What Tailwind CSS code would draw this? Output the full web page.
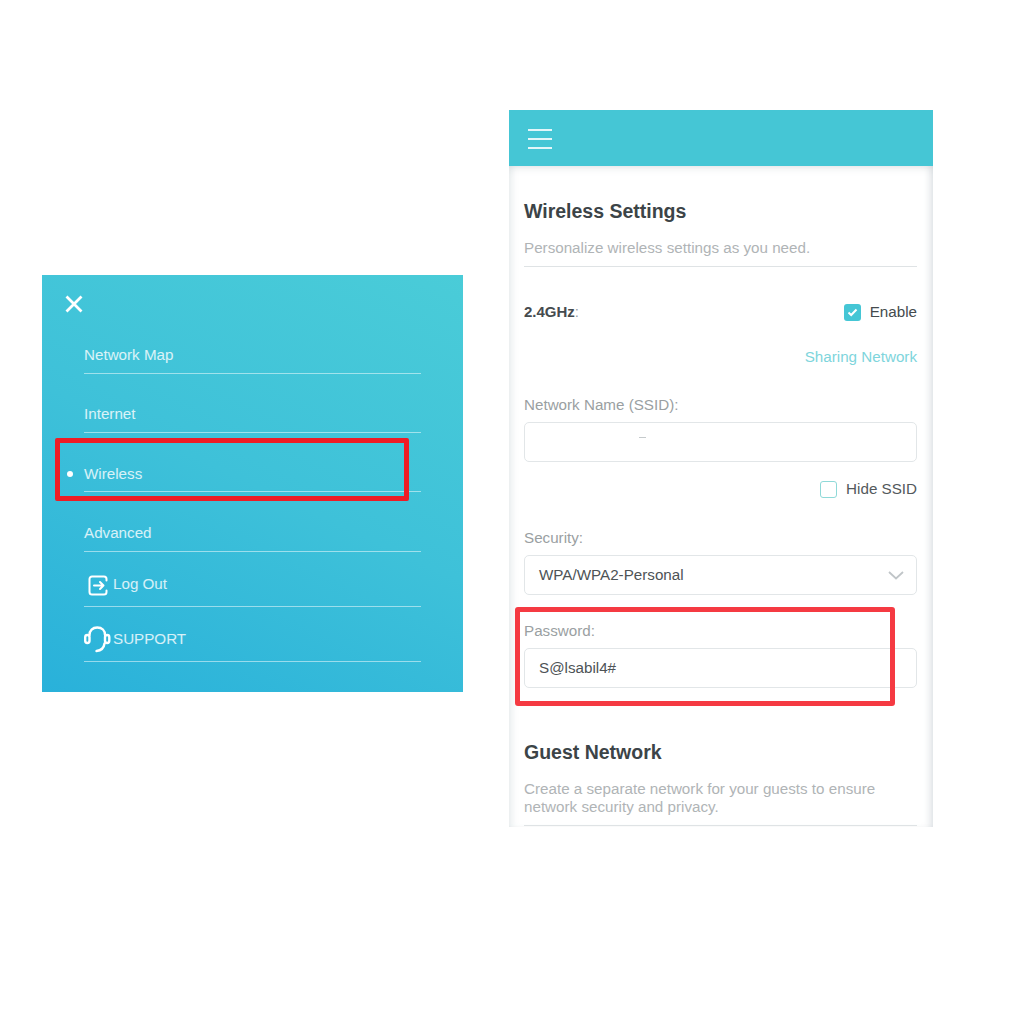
<!DOCTYPE html>
<html>
<head>
<meta charset="utf-8">
<script src="https://cdn.jsdelivr.net/npm/@tailwindcss/browser@4"></script>
</head>
<body class="bg-white font-['Liberation_Sans',Arial,sans-serif]">
<div class="relative w-[1024px] h-[1013px] overflow-hidden flex items-start pl-[42px]">

  <!-- Left menu panel -->
  <div class="relative mt-[275px] w-[421px] h-[417px] px-[42px] bg-linear-[205deg] from-[#4accd8] via-[#3ec1d9] to-[#29b1da] text-white/80 text-[15.200px] leading-[18px] shrink-0">
    <div class="h-[41px] -ml-[42px] pl-[23px] pt-[20px]">
      <svg width="18" height="18" viewBox="0 0 18 18" fill="none" stroke="white" stroke-width="2.800"><path d="M1.500 1.500 16.500 16.500M16.500 1.500 1.500 16.500"/></svg>
    </div>
    <div class="h-[58px] flex items-end pb-[9px] border-b border-white/50">Network Map</div>
    <div class="h-[59px] flex items-end pb-[9px] border-b border-white/50">Internet</div>
    <div class="relative h-[59px] flex items-end pb-[8px] border-b border-white/50">
      <span class="absolute -left-[17px] bottom-[14px] w-[6px] h-[6px] rounded-full bg-white"></span>
      Wireless
    </div>
    <div class="h-[60px] flex items-end pb-[9px] border-b border-white/50">Advanced</div>
    <div class="h-[55px] flex items-end pb-[13px] border-b border-white/50">
      <svg class="ml-[4px] mr-[5px] mb-[-3px]" width="20" height="21" viewBox="0 0 20 21" fill="none" stroke="white" stroke-width="2" stroke-linecap="round" stroke-linejoin="round"><path d="M18.500 5.500V4a2.500 2.500 0 0 0-2.500-2.500H4A2.500 2.500 0 0 0 1.500 4v13A2.500 2.500 0 0 0 4 19.500h12a2.500 2.500 0 0 0 2.500-2.500v-1.500"/><path d="M6 10.500H15.500M12 7l3.500 3.500L12 14"/></svg>
      <span>Log Out</span>
    </div>
    <div class="h-[55px] flex items-end pb-[13px] border-b border-white/50">
      <svg class="mb-[-5px] mr-[2px]" width="27" height="27" viewBox="0 0 27 27" fill="none" stroke="white" stroke-width="2.400" stroke-linecap="round"><path d="M5.500 9C5.500 4.500 8.500 1.500 13.250 1.500S21 4.500 21 9"/><rect x="1.200" y="9" width="4.300" height="8" rx="2.150"/><rect x="21" y="9" width="4.300" height="8" rx="2.150"/><path d="M20.500 17.500C20 21.500 17 24.500 12.500 25"/></svg>
      <span>SUPPORT</span>
    </div>
    <div class="absolute left-[13px] top-[163px] w-[354px] h-[63px] border-[5px] border-[#ee1c25] rounded-[2px]"></div>
  </div>

  <!-- Right settings panel -->
  <div class="relative ml-[46px] mt-[110px] w-[424px] h-[717px] overflow-hidden bg-white shrink-0">
    <div class="h-[56px] bg-[#45c6d5] flex flex-col justify-center gap-[7px] pl-[19px] pt-[2px]">
      <span class="w-[24px] h-[2px] bg-white/85"></span>
      <span class="w-[24px] h-[2px] bg-white/85"></span>
      <span class="w-[24px] h-[2px] bg-white/85"></span>
    </div>
    <div class="h-[661px] pl-[15px] pr-[16px] shadow-[inset_0_8px_8px_-6px_rgba(120,140,150,0.18),inset_7px_0_7px_-4px_rgba(120,140,150,0.16),inset_-7px_0_7px_-4px_rgba(120,140,150,0.24)] text-[15.200px] leading-[20px]">
      <h2 class="pt-[33px] text-[19.500px] leading-[24px] font-bold text-[#3c4447]">Wireless Settings</h2>
      <p class="mt-[15px] pb-[8px] border-b border-[#dfe3e5] text-[#b0b4b6]">Personalize wireless settings as you need.</p>
      <div class="mt-[33px] h-[24px] flex items-center justify-between text-[#454b4e]">
        <span class="text-[15px]"><b>2.4GHz</b><span class="text-[#9aa0a3]">:</span></span>
        <span class="flex items-center gap-[9px]">
          <span class="w-[17px] h-[17px] rounded-[3px] bg-[#45c6d5] flex items-center justify-center">
            <svg width="11" height="9" viewBox="0 0 11 9" fill="none" stroke="white" stroke-width="2"><path d="M1.500 4.500 4.200 7 9.500 1.500"/></svg>
          </span>
          Enable
        </span>
      </div>
      <div class="mt-[23px] text-right text-[#7ed5dc]">Sharing Network</div>
      <div class="mt-[28px] text-[#9a9fa2]">Network Name (SSID):</div>
      <div class="relative mt-[7px] h-[40px] border border-[#e2e6e8] rounded-[5px]">
        <span class="absolute left-[114px] top-[14px] w-[7px] h-px bg-[#c5cacc]"></span>
      </div>
      <div class="mt-[17px] h-[20px] flex items-center justify-end gap-[9px] text-[#53595c]">
        <span class="w-[17px] h-[17px] rounded-[3px] border-[1.500px] border-[#8fd9d8] bg-white"></span>
        Hide SSID
      </div>
      <div class="mt-[29px] text-[#9a9fa2]">Security:</div>
      <div class="mt-[7px] h-[40px] border border-[#e2e6e8] rounded-[5px] pl-[14px] pr-[12px] flex items-center justify-between text-[#4e5356]">
        WPA/WPA2-Personal
        <svg width="16" height="9" viewBox="0 0 16 9" fill="none" stroke="#c0c5c8" stroke-width="1.800"><path d="M1 1 8 7.500 15 1"/></svg>
      </div>
      <div class="mt-[26px] text-[#9a9fa2]">Password:</div>
      <div class="mt-[7px] h-[40px] border border-[#e2e6e8] rounded-[5px] pl-[14px] flex items-center text-[#4e5356]">S@lsabil4#</div>
      <h2 class="mt-[52px] text-[19.500px] leading-[24px] font-bold text-[#3c4447]">Guest Network</h2>
      <p class="mt-[16px] text-[#b0b4b6] leading-[18px]">Create a separate network for your guests to ensure<br>network security and privacy.</p>
      <div class="mt-[9px] border-b border-[#dfe3e5]"></div>
    </div>
  </div>

  <!-- Annotation over the password field -->
  <div class="absolute left-[515px] top-[607px] w-[380px] h-[99px] border-[5.500px] border-[#f53a42] rounded-[3px]"></div>
</div>
</body>
</html>
